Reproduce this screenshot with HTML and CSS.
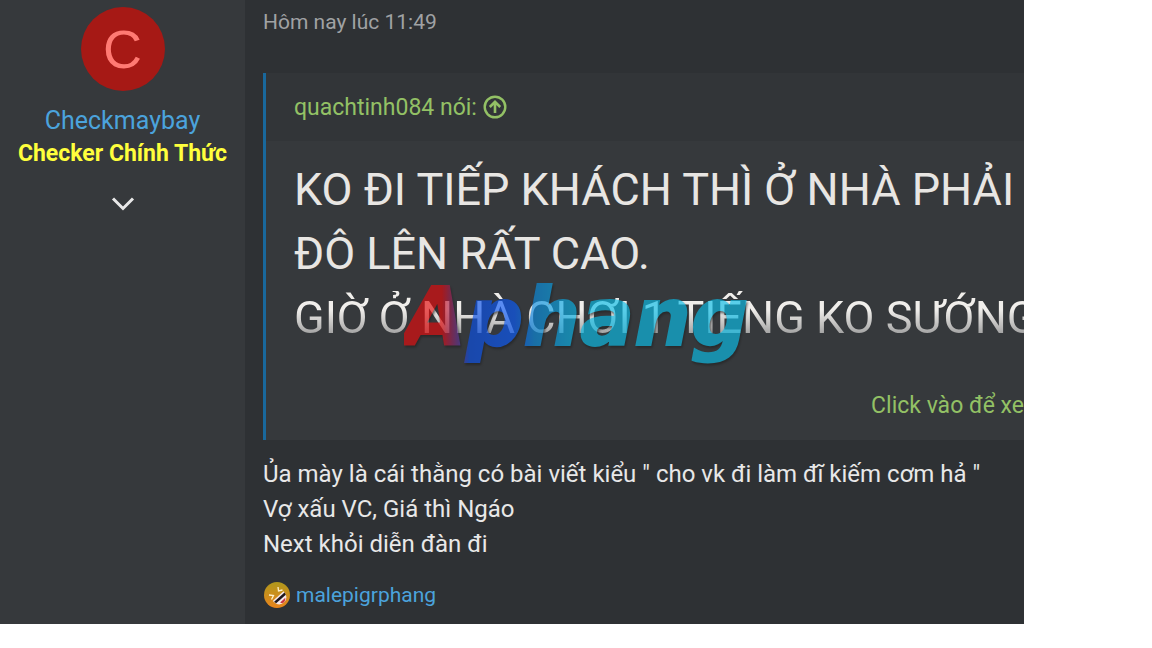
FILE: index.html
```html
<!DOCTYPE html>
<html lang="vi">

<head>
    <meta charset="UTF-8">
    <meta name="viewport" content="width=device-width, initial-scale=1.0">
    <title>Aphang</title>
    <link rel="stylesheet" href="styles.css">
</head>

<body>
    <article class="message">
        <aside class="message-user">
            <a href="#" class="avatar">C</a>
            <a href="#" class="username">Checkmaybay</a>
            <strong class="user-title">Checker Chính Thức</strong>
            <button type="button" class="user-toggle" aria-label="Checkmaybay">
                <svg width="24" height="16" viewBox="0 0 24 16">
                    <path d="M2 2.500 L12 12.500 L22 2.500" fill="none" stroke="#e8e8e8" stroke-width="3" />
                </svg>
            </button>
        </aside>

        <div class="message-main">
            <header class="message-date"><time>Hôm nay lúc 11:49</time></header>

            <blockquote class="quote">
                <a href="#" class="quote-title">
                    quachtinh084 nói:
                    <svg width="24" height="24" viewBox="0 0 24 24" fill="none" stroke="#93c165" stroke-width="2.400">
                        <circle cx="12" cy="12" r="10.300" />
                        <path d="M12 18 V7 M6.800 12 L12 6.800 L17.200 12" stroke-width="2.600" />
                    </svg>
                </a>
                <div class="quote-content">
                    KO ĐI TIẾP KHÁCH THÌ Ở NHÀ PHẢI<br>
                    ĐÔ LÊN RẤT CAO.<br>
                    <span class="faded">GIỜ Ở NHÀ CHƠI 1 TIẾNG KO SƯỚNG</span>
                    <span class="watermark">Aphang</span>
                </div>
                <a href="#" class="quote-expand">Click vào để xe</a>
            </blockquote>

            <p class="message-text">
                Ủa mày là cái thằng có bài viết kiểu " cho vk đi làm đĩ kiếm cơm hả "<br>
                Vợ xấu VC, Giá thì Ngáo<br>
                Next khỏi diễn đàn đi
            </p>

            <footer class="reactions">
                <svg width="28" height="28" viewBox="0 0 28 28">
                    <defs>
                        <linearGradient id="face" x1="0" y1="0" x2="0" y2="1">
                            <stop offset="0" stop-color="#b0981c" />
                            <stop offset="1" stop-color="#e8841c" />
                        </linearGradient>
                    </defs>
                    <circle cx="14" cy="14" r="13" fill="url(#face)" />
                    <path d="M15 6 L15.500 10 L19.500 9 M6 14 L10.500 14.500 L8.500 18.500" fill="none" stroke="#fff0c8" stroke-width="1.300" />
                    <g transform="rotate(-42 18 18)">
                        <path d="M10.500 14 H25 Q25 22.500 18 22.500 Q11 22.500 10.500 14Z" fill="#f4e8ea" />
                        <path d="M11 15.500 H25 L24.500 18 H11.500Z" fill="#1c1418" />
                        <path d="M15 20 H22 Q20.500 22.500 18 22.500 Q16 22.500 15 20Z" fill="#c83440" />
                    </g>
                </svg>
                <a href="#">malepigrphang</a>
            </footer>
        </div>
    </article>
</body>

</html>
```

FILE: styles.css
```css
body {
    margin: 0 128px 24px 0;
    background-color: #fff;
    font-family: Roboto, sans-serif;
    font-size: 23px;
    color: #e8e8e8;
}

a {
    color: #4ba3dc;
    text-decoration: none;
}

.message {
    display: flex;
    min-height: calc(100vh - 24px);
    background-color: #2e3134;
    overflow: hidden;
}

/* user column */
.message-user {
    display: flex;
    flex-direction: column;
    align-items: center;
    flex: 0 0 245px;
    box-sizing: border-box;
    padding-top: 7px;
    background-color: #36393c;
}

.avatar {
    width: 84px;
    height: 84px;
    margin-bottom: 13px;
    border-radius: 50%;
    background-color: #a61915;
    color: #ff7a73;
    font-family: "Liberation Sans", sans-serif;
    font-size: 54px;
    line-height: 84px;
    text-align: center;
}

.username,
.user-title {
    line-height: 33px;
}

.username {
    font-size: 25px;
}

.user-title {
    color: #ffff3c;
}

.user-toggle {
    display: flex;
    margin-top: 20px;
    padding: 6px;
    border: none;
    background: none;
    cursor: pointer;
}

/* post body */
.message-main {
    flex: 1;
    min-width: 0;
    padding-left: 18px;
}

.message-date {
    padding: 8px 0 37px;
    font-size: 21px;
    line-height: 28px;
    color: #a0a2a4;
}

.quote {
    margin: 0;
    border-left: 3px solid #19689c;
    background-color: #36393c;
    overflow: hidden;
}

.quote-title {
    display: flex;
    align-items: center;
    gap: 6px;
    height: 68px;
    padding-left: 28px;
    background-color: #323538;
    color: #93c165;
}

.quote-content {
    position: relative;
    padding: 17px 0 40px 28px;
    font-size: 45px;
    line-height: 64px;
    white-space: nowrap;
    color: #e8e6e3;
}

.faded {
    background: linear-gradient(#f0eeeb 35%, #a4a4a4 80%);
    -webkit-background-clip: text;
    background-clip: text;
    color: transparent;
}

/* site logo laid over the quote */
.watermark {
    position: absolute;
    left: 138px;
    bottom: 24px;
    font-family: "DejaVu Sans", sans-serif;
    font-size: 80px;
    font-weight: bold;
    font-style: italic;
    line-height: 96px;
    background: linear-gradient(90deg, #e50a0c 11%, #0a50e8 19%, #0a5bfc 32%, #0a8ce0 38%, #0abee9 52%);
    -webkit-background-clip: text;
    background-clip: text;
    -webkit-text-stroke: 2px transparent;
    color: transparent;
    opacity: 0.65;
    filter: drop-shadow(1px 2px 1px #222);
    pointer-events: none;
}

.quote-expand {
    display: block;
    padding-bottom: 18px;
    line-height: 32px;
    text-align: right;
    color: #93c165;
}

.message-text {
    margin: 17px 0 19px;
    font-size: 24px;
    line-height: 35px;
}

.reactions {
    display: flex;
    align-items: center;
    gap: 5px;
    font-size: 21px;
}
```
